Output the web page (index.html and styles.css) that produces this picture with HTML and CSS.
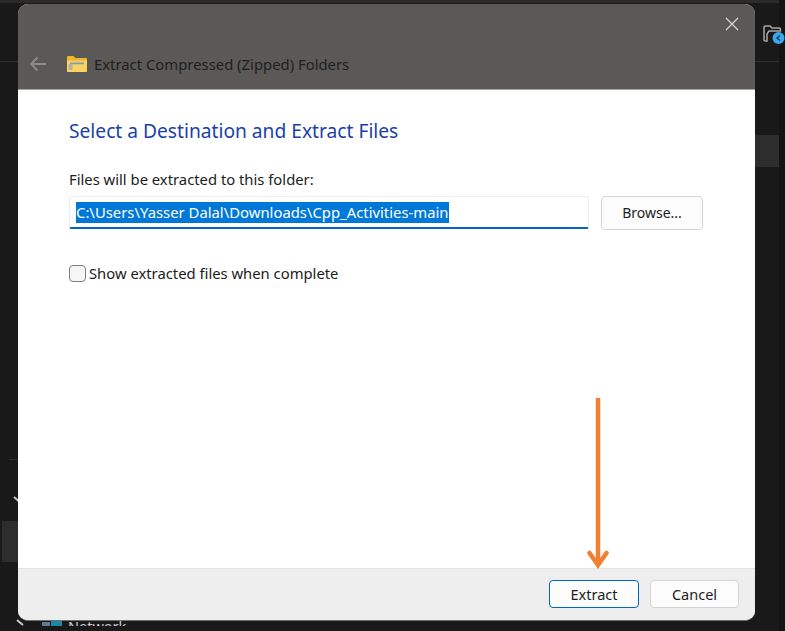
FILE: index.html
```html
<!DOCTYPE html>
<html lang="en">
<head>
<meta charset="utf-8">
<title>Extract Compressed (Zipped) Folders</title>
<link rel="stylesheet" href="styles.css">
</head>
<body>
<div class="desktop">
  <div class="bg-topline"></div>
  <div class="bg-rule bg-rule-left"></div>
  <div class="bg-rule bg-rule-right"></div>
  <div class="bg-row bg-row-right"></div>
  <div class="bg-row bg-row-left"></div>
  <div class="bg-rule bg-rule-low"></div>
  <div class="bg-scroll"></div>
  <svg class="bg-folder" width="24" height="22" viewBox="0 0 24 22" aria-hidden="true">
    <path d="M2 17V4.500C2 3.500 2.600 3 3.500 3H8l2 2h7c1 0 1.500.6 1.500 1.500V8H7L5 11v7H3.500C2.600 18 2 17.500 2 17Z" fill="none" stroke="#a8a8a8" stroke-width="1.500"/>
    <circle cx="16.500" cy="15" r="6" fill="#3aa6ec"/>
    <path d="M18 12.500 15 15l3 2.500" fill="none" stroke="#14385a" stroke-width="1.400"/>
  </svg>
  <svg class="bg-chevron" width="12" height="12" viewBox="0 0 12 12" aria-hidden="true"><path d="M1 1l8 7" stroke="#c8c8c8" stroke-width="2"/></svg>
  <svg class="bg-chevron-low" width="12" height="12" viewBox="0 0 12 12" aria-hidden="true"><path d="M1 1l6 5" stroke="#c8c8c8" stroke-width="2"/></svg>
  <div class="bg-network">
    <svg class="bg-network-icon" width="21" height="12" viewBox="0 0 21 12" aria-hidden="true"><rect x="0" y="2" width="8" height="9" fill="#5f7d8c"/><rect x="9" y="1" width="11" height="10" fill="#1c87a8"/></svg>
    <span>Network</span>
  </div>

  <main class="dialog">
    <header class="titlebar">
      <div class="close-row">
        <svg class="close" width="14" height="14" viewBox="0 0 14 14" aria-hidden="true"><path d="M1 1l12 12M13 1 1 13" stroke="#d6d5d3" stroke-width="1.200" fill="none"/></svg>
      </div>
      <div class="nav-row">
        <svg class="back" width="18" height="16" viewBox="0 0 18 16" aria-hidden="true"><path d="M17 8H2M8.500 1.500 2 8l6.500 6.500" stroke="#8d8c8a" stroke-width="1.800" fill="none"/></svg>
        <svg class="zip" width="20" height="16" viewBox="0 0 20 16" aria-hidden="true">
          <path d="M0 1.500C0 .7.500 0 1.300 0h5.200l2 2H19c.6 0 1 .5 1 1v3H0Z" fill="#f0b429"/>
          <path d="M0 4.500h20V15c0 .6-.4 1-1 1H1c-.6 0-1-.4-1-1Z" fill="#fbd35f"/>
          <rect x="3" y="5.500" width="14" height="3.500" fill="#c9c3ad"/>
          <rect x="3" y="6.800" width="14" height="1" fill="#8f8b7d"/>
          <rect x="1.500" y="8" width="4" height="6" fill="#b5b2a4"/>
        </svg>
        <span class="window-title">Extract Compressed (Zipped) Folders</span>
      </div>
    </header>
    <section class="content">
      <h1 class="heading">Select a Destination and Extract Files</h1>
      <label class="field-label">Files will be extracted to this folder:</label>
      <div class="path-row">
        <div class="path-input"><span class="selection">C:\Users\Yasser Dalal\Downloads\Cpp_Activities-main</span></div>
        <button class="btn btn-browse" type="button">Browse...</button>
      </div>
      <div class="check-row">
        <span class="checkbox"></span>
        <span class="check-label">Show extracted files when complete</span>
      </div>
    </section>
    <footer class="footer">
      <button class="btn btn-primary" type="button">Extract</button>
      <button class="btn btn-cancel" type="button">Cancel</button>
    </footer>
    <svg class="arrow" width="22" height="176" viewBox="0 0 22 176" aria-hidden="true">
      <path d="M11 0V166" stroke="#f28033" stroke-width="4.500" fill="none"/>
      <path d="M2.500 155 11 167l8.500-12" stroke="#f28033" stroke-width="4.500" stroke-linecap="round" fill="none"/>
    </svg>
  </main>
</div>
</body>
</html>
```

FILE: styles.css
```css
* { box-sizing: border-box; }
html, body { margin: 0; padding: 0; }
body { width: 785px; height: 631px; overflow: hidden; background: #191919; font-family: "Noto Sans", "Liberation Sans", sans-serif; }
.desktop { position: relative; width: 785px; height: 631px; padding: 4px 0 0 18px; overflow: hidden; background: #191919; }

.bg-topline { position: absolute; left: 0; top: 0; width: 785px; height: 3px; background: #2a2a2a; }
.bg-rule { position: absolute; height: 1px; background: #2f2f2f; }
.bg-rule-left { left: 0; top: 61px; width: 18px; }
.bg-rule-right { left: 755px; top: 61px; width: 30px; }
.bg-rule-low { left: 9px; top: 459px; width: 9px; }
.bg-row { position: absolute; background: #2d2d2d; }
.bg-row-right { left: 755px; top: 135px; width: 25px; height: 32px; }
.bg-row-left { left: 2px; top: 521px; width: 16px; height: 41px; }
.bg-scroll { position: absolute; left: 779px; top: 0; width: 6px; height: 631px; background: #141414; }
.bg-folder { position: absolute; left: 762px; top: 23px; }
.bg-chevron { position: absolute; left: 13px; top: 496px; }
.bg-chevron-low { position: absolute; left: 16px; top: 619px; }
.bg-network { position: absolute; left: 42px; top: 618px; display: flex; align-items: flex-start; gap: 5px; height: 8px; overflow: hidden; color: #c9c9c9; font-size: 14.500px; line-height: 16px; }
.bg-network-icon { flex: none; margin-top: 2px; }

.dialog { position: relative; display: flex; flex-direction: column; width: 737px; height: 617px; border-radius: 10px; overflow: hidden; background: #fff; border-bottom: 1.500px solid #6f6f6f; }

.titlebar { flex: none; height: 86px; background: #5a5957; border-bottom: 1px solid #a9a8a6; display: flex; flex-direction: column; }
.close-row { display: flex; justify-content: flex-end; padding: 13px 16px 0 0; height: 32px; }
.nav-row { display: flex; align-items: center; margin-top: 18px; padding-left: 11px; }
.back { flex: none; }
.zip { flex: none; margin-left: 20px; }
.window-title { margin-left: 7px; color: #1f1f1f; font-size: 14.850px; line-height: 20px; white-space: nowrap; }

.content { flex: 1; min-height: 0; padding: 27px 52px 0 51px; color: #1c1c1c; }
.heading { margin: 0; color: #1a3fa8; font-size: 19.200px; font-weight: 400; line-height: 28px; white-space: nowrap; }
.field-label { display: block; margin-top: 24px; font-size: 14.800px; line-height: 20px; white-space: nowrap; }
.path-row { display: flex; align-items: flex-start; gap: 12px; margin-top: 7px; }
.path-input { width: 520px; height: 33px; padding: 4px 0 0 6px; background: #fff; border: 1px solid #ededed; border-bottom: 2px solid #0067c0; border-radius: 2px; }
.selection { display: inline-block; height: 21px; background: #0078d7; color: #fff; font-size: 14.850px; line-height: 20px; white-space: nowrap; }
.btn { display: block; height: 28px; padding: 0; background: #fcfcfc; border: 1px solid #d4d4d4; border-radius: 4px; color: #1c1c1c; font-family: inherit; font-size: 14.500px; line-height: 24px; }
.btn-browse { width: 102px; height: 34px; font-size: 14px; }
.check-row { display: flex; align-items: center; gap: 3px; margin-top: 33px; }
.checkbox { flex: none; width: 17px; height: 17px; background: #f6f6f6; border: 1px solid #7f7f7f; border-radius: 4px; }
.check-label { font-size: 14.800px; line-height: 20px; white-space: nowrap; }

.footer { flex: none; display: flex; justify-content: flex-end; gap: 11px; height: 52px; padding: 11px 16px 0 0; background: #eeeeee; border-top: 1px solid #e4e4e4; }
.btn-primary { width: 90px; border: 1px solid #0067c0; }
.btn-cancel { width: 89px; }

.arrow { position: absolute; left: 568.500px; top: 394px; }
```
